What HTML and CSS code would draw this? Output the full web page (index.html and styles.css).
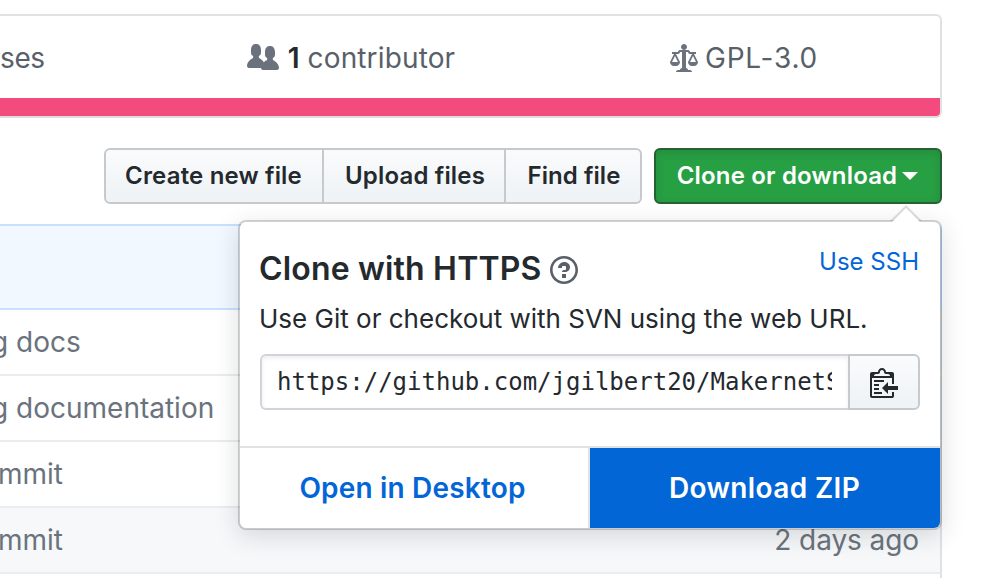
FILE: index.html
```html
<!DOCTYPE html>
<html lang="en">
<head>
<meta charset="utf-8">
<title>Clone or download</title>
<link rel="stylesheet" href="styles.css">
</head>
<body>
<main class="repo">
  <section class="summary">
    <div class="stats">
      <span class="stat stat-releases">ses</span>
      <span class="stat stat-people">
        <svg class="icon" width="32" height="32" viewBox="0 0 16 16"><path fill-rule="evenodd" d="M16 12.999c0 .439-.45 1-1 1H7.995c-.539 0-.994-.447-.995-.999H1c-.54 0-1-.561-1-1 0-2.634 3-4 3-4s.229-.409 0-1c-.841-.621-1.058-.59-1-3 .058-2.419 1.367-3 2.500-3s2.442.58 2.500 3c.058 2.410-.159 2.379-1 3-.229.59 0 1 0 1s1.549.711 2.420 2.088C9.196 9.369 10 8.999 10 8.999s.229-.409 0-1c-.841-.62-1.058-.59-1-3 .058-2.419 1.367-3 2.500-3s2.437.581 2.495 3c.059 2.410-.158 2.380-1 3-.229.59 0 1 0 1s3.005 1.366 3.005 4"/></svg>
        <b class="num">1</b>
        <span class="people-label">contributor</span>
      </span>
      <span class="stat stat-license">
        <svg class="icon" width="28" height="32" viewBox="0 0 14 16"><path fill-rule="evenodd" d="M7 4c-.83 0-1.500-.67-1.500-1.500S6.170 1 7 1s1.500.67 1.500 1.500S7.830 4 7 4zm7 6c0 1.110-.89 2-2 2h-1c-1.110 0-2-.89-2-2l2-4h-1c-.55 0-1-.45-1-1H8v8c.42 0 1 .45 1 1h1c.42 0 1 .45 1 1H3c0-.55.58-1 1-1h1c0-.55.58-1 1-1h.03L6 5H5c0 .55-.45 1-1 1H3l2 4c0 1.110-.89 2-2 2H2c-1.110 0-2-.89-2-2l2-4H1V5h3c0-.55.45-1 1-1h4c.55 0 1 .45 1 1h3v1h-1l2 4zM2.500 7L1 10h3L2.500 7zM13 10l-1.500-3-1.500 3h3z"/></svg>
        <span class="license-label">GPL-3.0</span>
      </span>
    </div>
    <div class="language-bar"></div>
  </section>

  <nav class="file-nav">
    <div class="btn-group">
      <button class="btn">Create new file</button>
      <button class="btn">Upload files</button>
      <button class="btn">Find file</button>
    </div>
    <div class="clone">
      <button class="btn btn-primary">Clone or download<span class="caret"></span></button>
      <div class="popover">
        <div class="popover-body">
          <div class="heading">
            <h4 class="title">Clone with HTTPS</h4>
            <svg class="help" width="28" height="32" viewBox="0 0 14 16"><path fill-rule="evenodd" d="M6 10h2v2H6v-2zm4-3.500C10 8.640 8 9 8 9H6c0-.55.45-1 1-1h.5c.28 0 .5-.22.5-.5v-1c0-.28-.22-.5-.5-.5h-1c-.28 0-.5.22-.5.5V7H4c0-1.500 1.500-3 3-3s3 1 3 2.500zM7 2.300c3.140 0 5.700 2.560 5.700 5.700s-2.560 5.700-5.700 5.700A5.710 5.710 0 0 1 1.300 8c0-3.140 2.560-5.700 5.700-5.700zM7 1C3.140 1 0 4.140 0 8s3.140 7 7 7 7-3.140 7-7-3.140-7-7-7z"/></svg>
            <a class="ssh">Use SSH</a>
          </div>
          <p class="hint">Use Git or checkout with SVN using the web URL.</p>
          <div class="url-group">
            <div class="url"><span class="url-text">https://github.com/jgilbert20/MakernetS</span></div>
            <button class="btn copy"><svg width="28" height="32" viewBox="0 0 14 16"><path fill-rule="evenodd" d="M2 13h4v1H2v-1zm5-6H2v1h5V7zm2 3V8l-3 3 3 3v-2h5v-2H9zM4.500 9H2v1h2.500V9zM2 12h2.500v-1H2v1zm9 1h1v2c-.02.28-.11.52-.3.7-.19.18-.42.28-.7.3H1c-.55 0-1-.45-1-1V4c0-.55.45-1 1-1h3c0-1.110.89-2 2-2 1.110 0 2 .89 2 2h3c.55 0 1 .45 1 1v5h-1V6H1v9h10v-2zM2 5h8c0-.55-.45-1-1-1H8c-.55 0-1-.45-1-1s-.45-1-1-1-1 .45-1 1-.45 1-1 1H3c-.55 0-1 .45-1 1z"/></svg></button>
          </div>
        </div>
        <div class="popover-actions">
          <a class="action">Open in Desktop</a>
          <a class="action action-primary">Download ZIP</a>
        </div>
      </div>
    </div>
  </nav>

  <section class="files">
    <div class="commit-bar"></div>
    <div class="row"><span class="msg msg-g">g docs</span></div>
    <div class="row"><span class="msg msg-g">g documentation</span></div>
    <div class="row"><span class="msg msg-m">mmit</span></div>
    <div class="row row-hover"><span class="msg msg-m">mmit</span><span class="age">2 days ago</span></div>
    <div class="row row-last"></div>
  </section>
</main>
</body>
</html>
```
FILE: styles.css
```css
* { box-sizing: border-box; }

body {
  margin: 0;
  height: 578px;
  overflow: hidden;
  background: #fff;
  color: #24292e;
  font-family: Inter, "Liberation Sans", sans-serif;
}

svg { display: block; fill: currentColor; flex: none; }

.repo { width: 942px; padding-top: 14px; }

/* Repository summary */
.summary {
  height: 104px;
  border: 2px solid #dfe2e5;
  border-left: 0;
  border-bottom-color: #dcdddf;
  border-radius: 0 6px 6px 0;
  overflow: hidden;
}
.stats {
  display: grid;
  grid-template-columns: 140px 422px 1fr;
  height: 82px;
  align-items: center;
  color: #586069;
  font-size: 28px;
  line-height: 42px;
  padding-top: 2px;
}
.stat { display: flex; align-items: center; }
.stat-releases { letter-spacing: -0.4px; }
.stat-people { justify-content: center; }
.stat-license { justify-content: center; padding-right: 14px; }
.icon { color: #6a737d; }
.num { margin-left: 9px; font-weight: 600; color: #24292e; }
.people-label { margin-left: 8px; letter-spacing: 0.14px; }
.license-label { margin-left: 7px; letter-spacing: 0.8px; }
.language-bar { height: 18px; background: #f34b7d; }

/* File navigation */
.file-nav {
  display: flex;
  justify-content: flex-end;
  gap: 12px;
  margin-top: 30px;
}
.btn-group { display: flex; }
.btn {
  height: 56px;
  padding: 0 20px;
  border: 2px solid #c7cacd;
  background: linear-gradient(#fafbfc, #eff3f6 90%);
  color: #24292e;
  font: 600 24px/50px Inter, "Liberation Sans", sans-serif;
  letter-spacing: 0.17px;
  white-space: nowrap;
}
.btn-group .btn:nth-child(1) { width: 220px; padding: 0 20px 0 19px; border-radius: 6px 0 0 6px; }
.btn-group .btn:nth-child(2) { width: 182px; padding: 0 19px 0 21px; border-left: 0; }
.btn-group .btn:nth-child(3) { width: 136px; padding: 0 19px 0 21px; border-left: 0; border-radius: 0 6px 6px 0; letter-spacing: 0.05px; }

.clone { position: relative; }
.btn-primary {
  display: flex;
  align-items: center;
  justify-content: center;
  width: 288px;
  padding: 0 21px 0 20px;
  border-color: #246234;
  border-radius: 6px;
  background: #279f43;
  box-shadow: inset 0 3px 8px rgba(27, 31, 35, 0.15);
  color: #fff;
}
.caret {
  margin-left: 5px;
  border: 8px solid transparent;
  border-top-color: #fff;
  border-bottom: 0;
}

/* Clone menu */
.popover {
  position: absolute;
  top: 72px;
  right: 0;
  width: 704px;
  height: 310px;
  display: flex;
  flex-direction: column;
  border: 2px solid rgba(27, 31, 35, 0.2);
  border-radius: 8px;
  background: #fff;
  background-clip: padding-box;
  box-shadow: 0 6px 24px rgba(27, 31, 35, 0.15);
}
.popover::before,
.popover::after {
  content: "";
  position: absolute;
  border: 16px solid transparent;
  border-top: 0;
}
.popover::before { top: -17px; right: 18px; border-bottom-color: rgba(27, 31, 35, 0.15); }
.popover::after { top: -14px; right: 20px; border-width: 0 14px 14px; border-bottom-color: #fff; }

.popover-body { flex: 1; padding: 23px 20px 0 19px; }
.heading { display: flex; align-items: center; height: 48px; }
.title { margin: 0; font-size: 32px; font-weight: 600; line-height: 48px; letter-spacing: 0.17px; }
.help { margin-left: 8px; color: #586069; margin-top: 2px; }
.ssh { margin: -14px 1px 0 auto; color: #0366d6; font-size: 24px; line-height: 36px; }
.hint { margin: 6px 0 0; font-size: 26px; line-height: 39px; white-space: nowrap; }
.url-group { display: flex; margin: 16px 0 0 1px; }
.url {
  width: 588px;
  height: 56px;
  padding: 0 16px 0 15px;
  border: 2px solid #d1d5da;
  border-right: 0;
  border-radius: 6px 0 0 6px;
  box-shadow: inset 0 2px 4px rgba(27, 31, 35, 0.075);
}
.url-text {
  display: block;
  overflow: hidden;
  font: 24px/52px "DejaVu Sans Mono", monospace;
  white-space: nowrap;
}
.copy { width: 72px; border-radius: 0 6px 6px 0; padding: 0 20px; }

.popover-actions {
  display: flex;
  height: 82px;
  border-top: 2px solid #dfe2e5;
}
.action {
  width: 350px;
  padding-right: 3px;
  border-right: 2px solid #dfe2e5;
  color: #0366d6;
  font-size: 28px;
  font-weight: 600;
  line-height: 80px;
  letter-spacing: 0.18px;
  text-align: center;
}
.action-primary {
  padding-right: 1px;
  border: 0;
  border-radius: 0 0 6px 0;
  background: #0366d6;
  color: #fff;
  letter-spacing: 0.36px;
}

/* File list */
.files { margin-top: 20px; color: #6a737d; font-size: 28px; }
.commit-bar {
  height: 86px;
  border: 2px solid #c8e1ff;
  border-left: 0;
  border-radius: 0 6px 0 0;
  background: #f1f8ff;
}
.row {
  display: flex;
  justify-content: space-between;
  height: 66px;
  padding-right: 21px;
  border-right: 2px solid #dfe2e5;
  border-bottom: 2px solid #eaecef;
  line-height: 64px;
  white-space: nowrap;
}
.row-hover { background: #f6f8fa; }
.row-last { height: 4px; border-bottom: 0; }
.msg-g { margin-left: -9px; }
.msg-m { margin-left: -2px; }
.age { letter-spacing: -0.08px; }
```
